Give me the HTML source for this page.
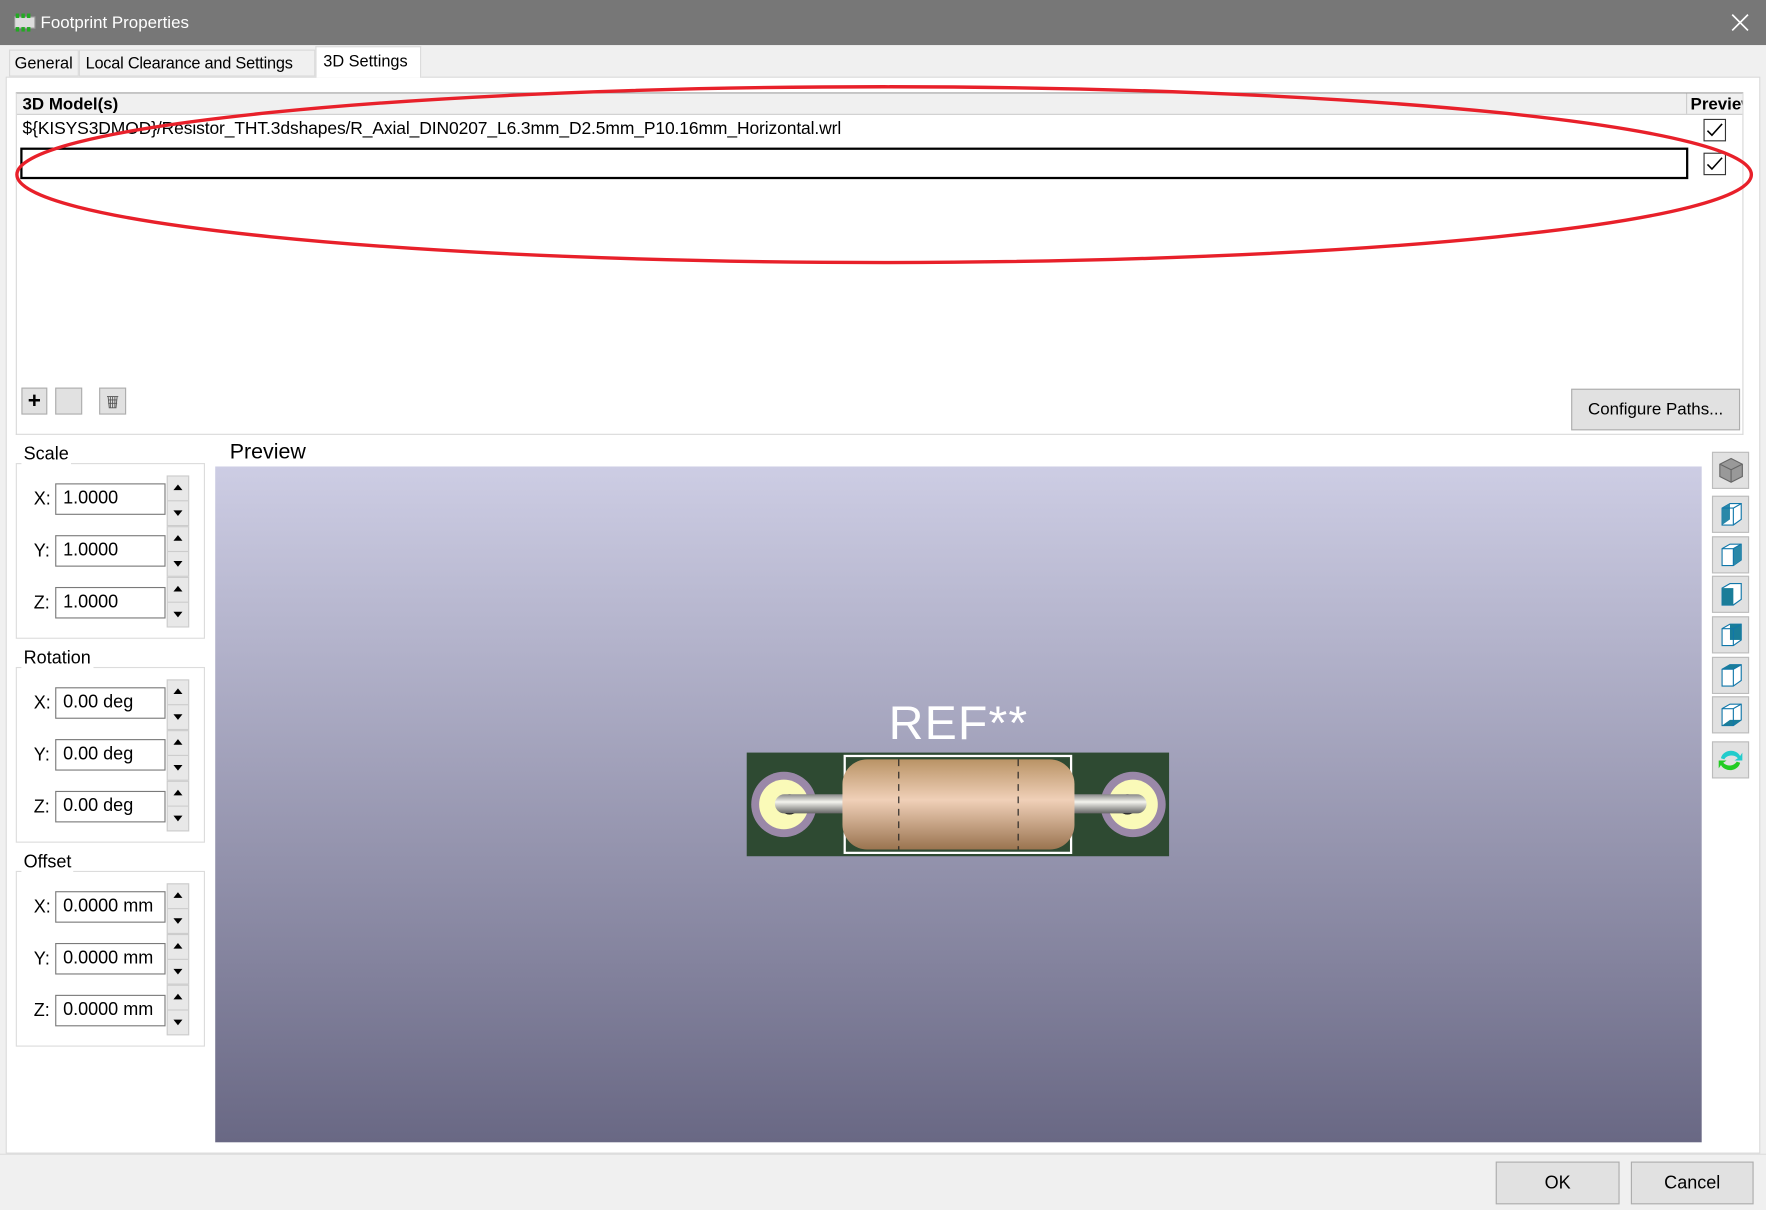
<!DOCTYPE html>
<html><head><meta charset="utf-8"><style>
html,body{margin:0;padding:0;width:1766px;height:1210px;overflow:hidden;background:#f0f0f0}
#w{position:absolute;left:0;top:0;width:1568px;height:1074px;transform:scale(1.12628,1.12663);transform-origin:0 0;font-family:"Liberation Sans",sans-serif;font-size:15px;color:#000;background:#f0f0f0}
.a{position:absolute;white-space:nowrap}
.btn{position:absolute;background:#e1e1e1;border:1px solid #adadad;box-sizing:border-box;text-align:center}
.inp{position:absolute;background:#fff;border:1px solid #7a7a7a;box-sizing:border-box;padding-left:6px;line-height:26px;font-size:16px;width:98px;height:28px;left:49px;white-space:nowrap}
.sp{position:absolute;left:148px;width:20px;height:45px;border:1px solid #ccc;box-sizing:border-box;background:#e8e8e8}
.sp:before{content:"";position:absolute;left:5px;top:7px;border:4px solid transparent;border-bottom:5px solid #000;border-top:0}
.sp:after{content:"";position:absolute;left:5px;top:30px;border:4px solid transparent;border-top:5px solid #000;border-bottom:0}
.sp i{position:absolute;left:0;right:0;top:21px;border-top:1px solid #ccc}
.lb{position:absolute;left:30px;font-size:16px}
.grp{position:absolute;left:14px;width:168px;border:1px solid #dcdcdc;box-sizing:border-box}
.gl{position:absolute;left:19px;background:#fff;padding:0 2px;font-size:16px}
.ic{position:absolute;left:1520px;width:33px;height:33px;background:#e1e1e1;border:1px solid #bcbcbc;box-sizing:border-box}
</style></head><body><div id="w">
<div class="a" style="left:0;top:0;width:1568px;height:40px;background:#777"></div>
<svg class="a" style="left:12px;top:11px" width="20" height="18"><rect x="1" y="4" width="18" height="10" fill="#ddd" stroke="#999"/><g fill="#2a2"><rect x="2" y="1" width="3" height="4"/><rect x="7" y="1" width="3" height="4"/><rect x="12" y="1" width="3" height="4"/><rect x="2" y="13" width="3" height="4"/><rect x="7" y="13" width="3" height="4"/><rect x="12" y="13" width="3" height="4"/></g></svg>
<div class="a" style="left:36px;top:12px;color:#fff;font-size:15px">Footprint Properties</div>
<svg class="a" style="left:1537px;top:12px" width="16" height="16"><path d="M1 1L15 15M15 1L1 15" stroke="#fff" stroke-width="1.5"/></svg>
<div class="a" style="left:5px;top:68px;width:1558px;height:956px;background:#fff;border:1px solid #d9d9d9;box-sizing:border-box"></div>
<div class="a" style="left:8px;top:44px;width:62px;height:24px;border:1px solid #d9d9d9;box-sizing:border-box;background:#f0f0f0;font-size:14.5px;padding:4px 0 0 4px;overflow:hidden">General</div>
<div class="a" style="left:70px;top:44px;width:210px;height:24px;border:1px solid #d9d9d9;box-sizing:border-box;background:#f0f0f0;font-size:14.5px;padding:4px 0 0 5px;overflow:hidden;letter-spacing:-0.2px">Local Clearance and Settings</div>
<div class="a" style="left:280px;top:41px;width:94px;height:28px;border:1px solid #d9d9d9;border-bottom:none;box-sizing:border-box;background:#fff;font-size:14.5px;padding:5px 0 0 6px">3D Settings</div>
<div class="a" style="left:14px;top:82px;width:1534px;height:304px;border:1px solid #d9d9d9;border-top-color:#a0a0a0;box-sizing:border-box"></div>
<div class="a" style="left:15px;top:83px;width:1532px;height:18px;background:#f0f0f0;border-bottom:1px solid #d0d0d0"></div>
<div class="a" style="left:20px;top:84px;font-weight:bold;font-size:15px">3D Model(s)</div>
<div class="a" style="left:1497px;top:83px;width:1px;height:18px;background:#ccc"></div>
<div class="a" style="left:1501px;top:84px;width:46px;overflow:hidden;font-weight:bold;font-size:15px">Preview</div>
<div class="a" style="left:20px;top:106px;font-size:15.5px;letter-spacing:-0.1px">${KISYS3DMOD}/Resistor_THT.3dshapes/R_Axial_DIN0207_L6.3mm_D2.5mm_P10.16mm_Horizontal.wrl</div>
<div class="a" style="left:18px;top:131px;width:1481px;height:28px;border:2px solid #000;box-sizing:border-box"></div>
<svg class="a" style="left:1512px;top:105px" width="22" height="52"><rect x="1" y="1" width="19" height="19" fill="#fff" stroke="#333"/><path d="M4 11l4 4 9-10" stroke="#000" fill="none" stroke-width="1.4"/><rect x="1" y="31" width="19" height="19" fill="#fff" stroke="#333"/><path d="M4 41l4 4 9-10" stroke="#000" fill="none" stroke-width="1.4"/></svg>
<div class="btn" style="left:19px;top:344px;width:23px;height:24px;font-size:20px;font-weight:bold;line-height:22px">+</div>
<div class="btn" style="left:49px;top:344px;width:24px;height:24px"></div>
<div class="btn" style="left:88px;top:344px;width:24px;height:24px"><svg width="14" height="14" style="margin-top:4px"><path d="M2 3h10M3 3l1 10h6l1-10M5 3v10M7 3v10M9 3v10M3 6h8M3 9h8" stroke="#555" fill="none" stroke-width="0.8"/></svg></div>
<div class="btn" style="left:1395px;top:345px;width:150px;height:37px;line-height:36px;font-size:15px">Configure Paths...</div>
<div class="grp" style="top:411px;height:156px"></div><div class="gl" style="top:395px">Scale</div>
<div class="grp" style="top:592px;height:156px"></div><div class="gl" style="top:576px">Rotation</div>
<div class="grp" style="top:773px;height:156px"></div><div class="gl" style="top:757px">Offset</div>
<div class="lb" style="top:435px">X:</div><div class="inp" style="top:429px">1.0000</div><div class="sp" style="top:422px"><i></i></div>
<div class="lb" style="top:481px">Y:</div><div class="inp" style="top:475px">1.0000</div><div class="sp" style="top:467px"><i></i></div>
<div class="lb" style="top:527px">Z:</div><div class="inp" style="top:521px">1.0000</div><div class="sp" style="top:512px"><i></i></div>
<div class="lb" style="top:616px">X:</div><div class="inp" style="top:610px">0.00 deg</div><div class="sp" style="top:603px"><i></i></div>
<div class="lb" style="top:662px">Y:</div><div class="inp" style="top:656px">0.00 deg</div><div class="sp" style="top:648px"><i></i></div>
<div class="lb" style="top:708px">Z:</div><div class="inp" style="top:702px">0.00 deg</div><div class="sp" style="top:693px"><i></i></div>
<div class="lb" style="top:797px">X:</div><div class="inp" style="top:791px">0.0000 mm</div><div class="sp" style="top:784px"><i></i></div>
<div class="lb" style="top:843px">Y:</div><div class="inp" style="top:837px">0.0000 mm</div><div class="sp" style="top:829px"><i></i></div>
<div class="lb" style="top:889px">Z:</div><div class="inp" style="top:883px">0.0000 mm</div><div class="sp" style="top:874px"><i></i></div>
<div class="a" style="left:204px;top:391px;font-size:19px">Preview</div>
<svg class="a" style="left:191px;top:414px" width="1320" height="600">
<defs><linearGradient id="bg" x1="0" y1="0" x2="0" y2="1"><stop offset="0" stop-color="#cdcde4"/><stop offset="1" stop-color="#696884"/></linearGradient>
<linearGradient id="bd" x1="0" y1="0" x2="0" y2="1"><stop offset="0" stop-color="#b99366"/><stop offset=".45" stop-color="#f0d0b8"/><stop offset="1" stop-color="#9a7450"/></linearGradient>
<linearGradient id="ld" x1="0" y1="0" x2="0" y2="1"><stop offset="0" stop-color="#888"/><stop offset=".4" stop-color="#f4f4ee"/><stop offset="1" stop-color="#666"/></linearGradient></defs>
<rect width="1320" height="600" fill="url(#bg)"/>
<text x="660" y="242" text-anchor="middle" fill="#fff" font-size="42" font-family="Liberation Sans" letter-spacing="1" textLength="124" lengthAdjust="spacingAndGlyphs">REF**</text>
<rect x="472" y="254" width="375" height="92" fill="#2e4a32"/>
<circle cx="505" cy="300" r="29" fill="#9a88a8"/><circle cx="505" cy="300" r="22" fill="#fafab8"/>
<circle cx="815" cy="300" r="29" fill="#9a88a8"/><circle cx="815" cy="300" r="22" fill="#fafab8"/>
<circle cx="510" cy="300" r="9" fill="#111"/><circle cx="810" cy="300" r="9" fill="#111"/>
<rect x="497" y="291" width="330" height="17" rx="8.5" fill="url(#ld)"/>
<rect x="559" y="257" width="201" height="86" fill="none" stroke="#fff" stroke-width="2"/>
<rect x="557" y="260" width="206" height="80" rx="22" fill="url(#bd)"/>
<path d="M607 260v80M713 260v80" stroke="#222" stroke-dasharray="6 5"/>
</svg>
<div class="ic" style="top:401px"><svg width="31" height="31"><path d="M16 5l10 5v11l-10 5-10-5V10z" fill="#999" stroke="#666"/><path d="M6 10l10 5 10-5M16 15v11" stroke="#666" fill="none"/></svg></div>
<div class="ic" style="top:440px"><svg width="31" height="31"><path d="M8 10l7-4h10v14l-7 5H8z" fill="#fff" stroke="#17a"/><path d="M8 10l7-4v14l-7 5z" fill="#2a88a8"/><path d="M8 10h10v15M18 10l7-4" fill="none" stroke="#17a"/></svg></div>
<div class="ic" style="top:476px"><svg width="31" height="31"><path d="M8 10l7-4h10v14l-7 5H8z" fill="#fff" stroke="#17a"/><path d="M18 10l7-4v14l-7 5z" fill="#2a88a8"/><path d="M8 10h10v15M18 10l7-4" fill="none" stroke="#17a"/></svg></div>
<div class="ic" style="top:511px"><svg width="31" height="31"><path d="M8 10l7-4h10v14l-7 5H8z" fill="#fff" stroke="#17a"/><rect x="8" y="10" width="10" height="15" fill="#1a7d99"/></svg></div>
<div class="ic" style="top:547px"><svg width="31" height="31"><path d="M8 10l7-4h10v14l-7 5H8z" fill="#fff" stroke="#17a"/><rect x="15" y="6" width="10" height="14" fill="#1a7d99"/><path d="M8 10h10v15M18 10l7-4" fill="none" stroke="#17a"/></svg></div>
<div class="ic" style="top:583px"><svg width="31" height="31"><path d="M8 10l7-4h10v14l-7 5H8z" fill="#fff" stroke="#17a"/><path d="M8 10l7-4h10l-7 4z" fill="#1a7d99"/><path d="M8 10h10v15M18 10l7-4" fill="none" stroke="#17a"/></svg></div>
<div class="ic" style="top:618px"><svg width="31" height="31"><path d="M8 10l7-4h10v14l-7 5H8z" fill="#fff" stroke="#17a"/><path d="M8 25l7-5h10l-7 5z" fill="#1a7d99"/><path d="M8 10h10v15M18 10l7-4" fill="none" stroke="#17a"/></svg></div>
<div class="ic" style="top:658px"><svg width="31" height="31"><path d="M7 14a9 8 0 0 1 17-2l2-3v7h-7l3-2a7 6 0 0 0-12 1z" fill="#2cc"/><path d="M24 18a9 8 0 0 1-17 2l-2 3v-7h7l-3 2a7 6 0 0 0 12-1z" fill="#2c2"/></svg></div>
<div class="a" style="left:0;top:1024px;width:1568px;height:1px;background:#dcdcdc"></div>
<div class="btn" style="left:1328px;top:1031px;width:110px;height:38px;line-height:37px;font-size:16px">OK</div>
<div class="btn" style="left:1448px;top:1031px;width:109px;height:38px;line-height:37px;font-size:16px">Cancel</div>
<svg class="a" style="left:0;top:0" width="1568" height="260"><ellipse cx="785" cy="155" rx="770" ry="78" fill="none" stroke="#e8202a" stroke-width="3"/></svg>
</div></body></html>
